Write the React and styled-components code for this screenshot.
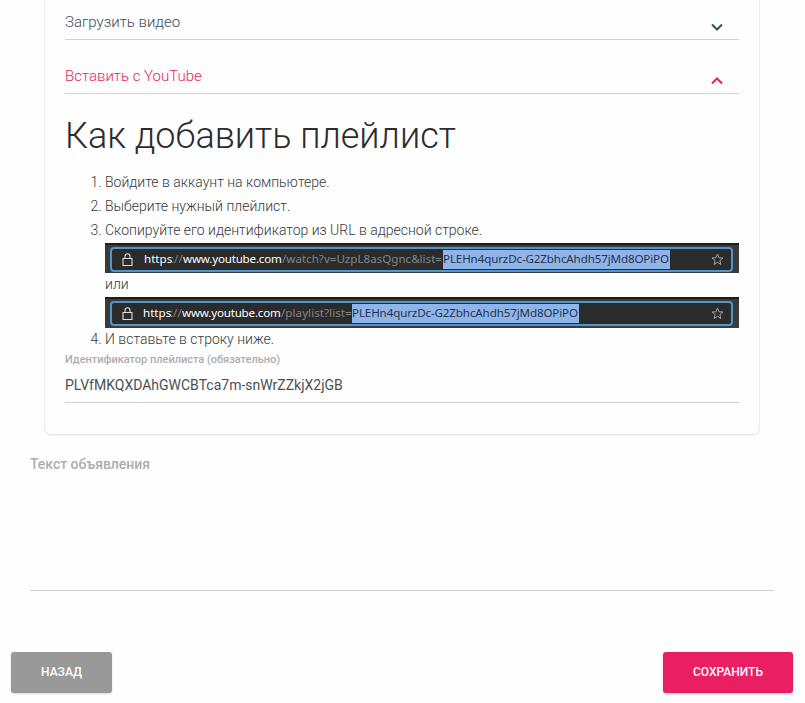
import React from "react";
import styled, { createGlobalStyle } from "styled-components";

const GlobalStyle = createGlobalStyle`
  *, *::before, *::after { box-sizing: border-box; }
  html, body { height: 100%; }
  body {
    margin: 0;
    overflow: hidden;
    background: #fefefe;
    font-family: Roboto, "Liberation Sans", sans-serif;
    font-size: 14px;
    font-weight: 300;
    color: #37393a;
  }
`;

const Page = styled.main`
  width: 805px;
  height: 703px;
  display: flex;
  flex-direction: column;
`;

const Card = styled.section`
  margin-left: 44px;
  width: 716px;
  height: 435px;
  padding: 0 20px;
  border: 1px solid #e7edee;
  border-top: 0;
  border-bottom-color: #e4e6e6;
  border-radius: 0 0 7px 7px;
  box-shadow: 0 1px 0 #f3f3f3;
`;

const AccordionHeader = styled.button`
  display: flex;
  align-items: flex-start;
  justify-content: space-between;
  width: 100%;
  height: ${(p) => (p.$open ? 54 : 40)}px;
  padding: ${(p) => (p.$open ? 25 : 11)}px 16px 0 0;
  border: 0;
  border-bottom: 1px solid #cfd1d2;
  background: none;
  font: 300 15px/22px Roboto, sans-serif;
  color: ${(p) => (p.$open ? "#e91e63" : "#3f4a5a")};
`;

const Chevron = styled.svg`
  width: 12px;
  height: 8px;
  margin-top: 12px;
  fill: none;
  stroke: currentColor;
  stroke-width: 2;
`;

const Heading = styled.h1`
  margin: 22px 0 14px;
  font-size: 36px;
  line-height: 40px;
  font-weight: 300;
  color: #2c2c2c;
`;

const Steps = styled.ol`
  margin: 0;
  padding-left: 40px;
  line-height: 24px;
`;

const LastStep = styled.li`
  height: 23px;
  line-height: 22px;
`;

const Or = styled.div`
  height: 24px;
  line-height: 22px;
`;

const AddressBar = styled.div`
  height: ${(p) => p.$height}px;
  margin-top: ${(p) => p.$gap || 0}px;
  padding: 4px 6px ${(p) => (p.$height === 30 ? 1 : 2)}px 5px;
  background: #3a3a3b;
  border-top: 2px solid #1d1d1e;
  display: flex;
`;

const AddressField = styled.div`
  flex: 1;
  display: flex;
  align-items: center;
  padding: 0 7px 0 10px;
  margin-top: -2px;
  border: 2px solid #5095cc;
  border-radius: 4px;
  background: #2b2b2c;
  color: #858585;
  font: 400 11.6px/17px "Noto Sans", "Open Sans", sans-serif;
  white-space: pre;
`;

const Segment = styled.span`
  flex: none;
  height: 19px;
  width: ${(p) => p.$width}px;
  letter-spacing: ${(p) => p.$spacing || 0}px;
  color: ${(p) => (p.$bright ? "#ffffff" : "inherit")};
`;

const Selected = styled(Segment)`
  background: #91b4e8;
  color: #23344f;
`;

const LockIcon = styled.svg`
  flex: none;
  width: 11px;
  height: 14px;
  margin-right: ${(p) => p.$gap}px;
  fill: none;
  stroke: #dededf;
  stroke-width: 1.1;
`;

const StarIcon = styled.svg`
  width: 13px;
  height: 13px;
  margin-left: auto;
  fill: none;
  stroke: #a3a3a3;
  stroke-width: 1;
`;

const FieldLabel = styled.label`
  display: block;
  height: 17px;
  font-size: 11px;
  line-height: 17px;
  font-weight: 500;
  letter-spacing: -0.02px;
  color: #adadad;
`;

const PlaylistInput = styled.input`
  display: block;
  width: 100%;
  height: 35px;
  padding: 0 0 1px;
  border: 0;
  border-bottom: 1px solid #cbd1d2;
  border-radius: 0;
  background: none;
  font: 400 14px Roboto, sans-serif;
  color: #495057;
`;

const AdText = styled.textarea`
  display: block;
  width: 744px;
  height: 136px;
  margin: 20px 0 0 30px;
  padding: 0;
  border: 0;
  border-bottom: 1px solid #cbd1d2;
  background: none;
  resize: none;
  font: 400 14px/19px Roboto, sans-serif;
  &::placeholder { color: #adadad; opacity: 1; font-weight: 500; letter-spacing: -0.04px; }
`;

const Actions = styled.footer`
  display: flex;
  justify-content: space-between;
  padding: 0 12px 0 11px;
  margin-top: 61px;
`;

const Button = styled.button`
  width: ${(p) => p.$width}px;
  height: 41px;
  padding: 0 0 2px;
  border: 0;
  border-radius: 3px;
  background: ${(p) => (p.$primary ? "#e91e63" : "#999999")};
  box-shadow: 0 1px 2px ${(p) => (p.$primary ? "#f6bacd" : "#d8d8d8")};
  color: #ffffff;
  font: 500 12px Roboto, sans-serif;
  text-transform: uppercase;
`;

function Accordion({ open, children }) {
  return (
    <AccordionHeader $open={open} type="button" aria-expanded={open}>
      {children}
      <Chevron viewBox="0 0 12 8">
        <path d={open ? "M1 6.5 6 1.5l5 5" : "M1 1.5l5 5 5-5"} />
      </Chevron>
    </AccordionHeader>
  );
}

function Address({ height, gap, iconGap, path, pathWidth, pathSpacing }) {
  return (
    <AddressBar $height={height} $gap={gap}>
      <AddressField>
        <LockIcon $gap={iconGap} viewBox="0 0 11 14">
          <path d="M1 5.5h9v7H1zM3 5.5V3.2C3 1.8 4 .8 5.5.8S8 1.8 8 3.2v2.3" />
        </LockIcon>
        <Segment $width={27} $bright>https</Segment>
        <Segment $width={12}>://</Segment>
        <Segment $width={99} $spacing={-0.2} $bright>www.youtube.com</Segment>
        <Segment $width={pathWidth} $spacing={pathSpacing}>{path}</Segment>
        <Selected $width={227} $spacing={-0.13}>PLEHn4qurzDc-G2ZbhcAhdh57jMd8OPiPO</Selected>
        <StarIcon viewBox="0 0 13 13">
          <path d="m6.5 1 1.5 3.8 4 .2-3.1 2.5 1 4-3.4-2.2-3.4 2.2 1-4L1 5l4-.2z" />
        </StarIcon>
      </AddressField>
    </AddressBar>
  );
}

export default function App() {
  return (
    <>
      <GlobalStyle />
      <Page>
        <Card>
          <Accordion open={false}>Загрузить видео</Accordion>
          <Accordion open>Вставить с YouTube</Accordion>
          <Heading>Как добавить плейлист</Heading>
          <Steps>
            <li>Войдите в аккаунт на компьютере.</li>
            <li>Выберите нужный плейлист.</li>
            <li>
              Скопируйте его идентификатор из URL в адресной строке.
              <Address height={30} gap={1} iconGap={11} path="/watch?v=UzpL8asQgnc&list=" pathWidth={161} />
              <Or>или</Or>
              <Address height={31} iconGap={10} path="/playlist?list=" pathWidth={71} pathSpacing={0.05} />
            </li>
            <LastStep>И вставьте в строку ниже.</LastStep>
          </Steps>
          <FieldLabel htmlFor="playlist">Идентификатор плейлиста (обязательно)</FieldLabel>
          <PlaylistInput id="playlist" defaultValue="PLVfMKQXDAhGWCBTca7m-snWrZZkjX2jGB" />
        </Card>
        <AdText placeholder="Текст объявления" />
        <Actions>
          <Button type="button" $width={101}>Назад</Button>
          <Button type="button" $width={130} $primary>Сохранить</Button>
        </Actions>
      </Page>
    </>
  );
}
